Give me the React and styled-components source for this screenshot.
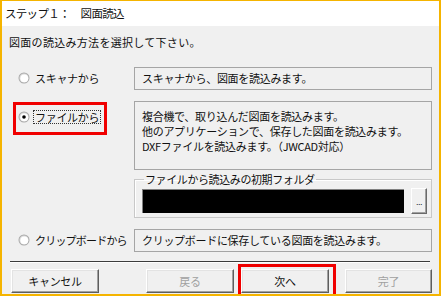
import styled, { createGlobalStyle } from "styled-components";

const GlobalStyle = createGlobalStyle`
  html, body {
    margin: 0;
    padding: 0;
    background: #ffffff;
  }
  body {
    font-family: "Noto Sans CJK JP", "Noto Sans", sans-serif;
    font-size: 11px;
    color: #111;
  }
`;

const Radio = ({ checked }) => (
  <RadioMark width="12" height="12" viewBox="0 0 12 12">
    <circle cx="6" cy="6" r="5.5" fill="#a8a8a8" />
    <circle cx="6" cy="6" r="4.6" fill="#dcdcdc" />
    <circle cx="6.3" cy="6.3" r="3.9" fill="#ffffff" />
    {checked && <circle cx="6" cy="6" r="1.8" fill="#000" />}
  </RadioMark>
);

const App = () => {
  return (
    <>
      <GlobalStyle />
      <Frame>
        <Header>ステップ１：　図面読込</Header>
        <Body>
          <Instruction>図面の読込み方法を選択して下さい。</Instruction>

          <Options>
            <Choice>
              <Radio />
              <ChoiceLabel>スキャナから</ChoiceLabel>
            </Choice>
            <InfoBox>スキャナから、図面を読込みます。</InfoBox>

            <Choice $top>
              <Highlight>
                <Radio checked />
                <ChoiceLabel $focused>ファイルから</ChoiceLabel>
              </Highlight>
            </Choice>
            <InfoBox $tall>
              <div>複合機で、取り込んだ図面を読込みます。</div>
              <div>他のアプリケーションで、保存した図面を読込みます。</div>
              <div>DXFファイルを読込みます。（JWCAD対応）</div>
            </InfoBox>

            <span />
            <Group>
              <Legend>ファイルから読込みの初期フォルダ</Legend>
              <FolderRow>
                <FolderField />
                <BrowseButton>...</BrowseButton>
              </FolderRow>
            </Group>

            <Choice>
              <Radio />
              <ChoiceLabel $tight>クリップボードから</ChoiceLabel>
            </Choice>
            <InfoBox>クリップボードに保存している図面を読込みます。</InfoBox>
          </Options>

          <Separator />

          <ButtonRow>
            <Button>キャンセル</Button>
            <Button disabled $gap={47}>戻る</Button>
            <Button $gap={7} $marked>
              次へ
            </Button>
            <Button disabled $gap={16} $w={87}>
              完了
            </Button>
          </ButtonRow>
        </Body>
      </Frame>
    </>
  );
};

export default App;

const Frame = styled.div`
  width: 441px;
  height: 296px;
  box-sizing: border-box;
  border: 2px solid #f5b400;
  border-top-width: 1px;
  background: #f0f0f0;
  display: flex;
  flex-direction: column;
  overflow: hidden;
`;

const Header = styled.div`
  height: 25px;
  background: #ffffff;
  padding-left: 3px;
  font-size: 11.5px;
  line-height: 25px;
  letter-spacing: -0.7px;
  white-space: pre;
`;

const Body = styled.div`
  flex: 1;
  display: flex;
  flex-direction: column;
  padding: 8px 7px 0 6px;
`;

const Instruction = styled.div`
  line-height: 16px;
  padding-left: 1px;
  letter-spacing: 0.3px;
`;

const Options = styled.div`
  margin-top: 17px;
  display: grid;
  grid-template-columns: 126px 298px;
  grid-template-rows: 23px 67px 39px 23px;
  row-gap: 11px;

  & > :nth-child(4) {
    margin-bottom: -2px;
  }
`;

const Choice = styled.div`
  display: flex;
  align-items: ${(p) => (p.$top ? "flex-start" : "center")};
  padding-left: 10px;
  padding-top: ${(p) => (p.$top ? "11px" : "0")};
  margin-top: -2px;
`;

const Highlight = styled.div`
  display: flex;
  align-items: center;
  position: relative;

  &::after {
    content: "";
    position: absolute;
    left: -5px;
    top: -8px;
    width: 88px;
    height: 27px;
    border: 3px solid #f00000;
  }
`;

const RadioMark = styled.svg`
  flex: none;
  display: block;
`;

const ChoiceLabel = styled.span`
  margin-left: 3px;
  line-height: 12px;
  padding: 0 1px;
  letter-spacing: ${(p) => (p.$tight ? "-0.8px" : "-0.3px")};
  white-space: nowrap;
  border: 1px dotted ${(p) => (p.$focused ? "#333" : "transparent")};
`;

const InfoBox = styled.div`
  box-sizing: border-box;
  border: 1px solid #a5a5a5;
  background: #f0f0f0;
  padding: ${(p) => (p.$tall ? "7px 7px" : "0 7px")};
  line-height: ${(p) => (p.$tall ? "15px" : "21px")};
  letter-spacing: -0.3px;
  white-space: nowrap;
`;

const Group = styled.fieldset`
  margin: -7px 0 0 0;
  padding: 2px 4px 3px 7px;
  border: 1px solid #c8c8c8;
  box-shadow: inset 1px 1px 0 #ffffff;
  min-width: 0;
`;

const Legend = styled.legend`
  padding: 0 1px;
  margin-left: 2px;
  line-height: 14px;
  letter-spacing: -0.4px;
`;

const FolderRow = styled.div`
  display: flex;
  align-items: center;
  gap: 7px;
`;

const FolderField = styled.div`
  flex: 1;
  height: 23px;
  background: #000;
  border-top: 1px solid #808080;
  border-left: 1px solid #808080;
`;

const BrowseButton = styled.div`
  box-sizing: border-box;
  width: 16px;
  height: 26px;
  background: #f0f0f0;
  border: 1px solid;
  border-color: #ffffff #6a6a6a #6a6a6a #ffffff;
  box-shadow: inset -1px -1px 0 #a0a0a0;
  font-family: "Liberation Sans", sans-serif;
  font-size: 9px;
  line-height: 9px;
  text-align: center;
  padding-top: 9px;
  letter-spacing: -0.5px;
`;

const Separator = styled.div`
  margin: 9px 2px 0 2px;
  height: 1px;
  background: #3c3c3c;
  border-bottom: 1px solid #ffffff;
`;

const ButtonRow = styled.div`
  display: flex;
  margin-top: 6px;
  padding-left: 3px;
`;

const Button = styled.div`
  box-sizing: border-box;
  width: ${(p) => p.$w || 88}px;
  height: 24px;
  margin-left: ${(p) => p.$gap || 0}px;
  background: #f0f0f0;
  border: 1px solid;
  border-color: #ffffff #5e5e5e #5e5e5e #ffffff;
  box-shadow: inset -1px -1px 0 #a0a0a0, inset 1px 1px 0 #e3e3e3;
  display: flex;
  align-items: center;
  justify-content: center;
  color: ${(p) => (p.disabled ? "#a0a0a0" : "#111")};
  letter-spacing: -0.3px;
  position: relative;

  ${(p) =>
    p.$marked &&
    `
    &::after {
      content: "";
      position: absolute;
      left: -4px;
      top: -6px;
      right: -8px;
      bottom: -5px;
      border: 3px solid #f00000;
    }
  `}
`;
